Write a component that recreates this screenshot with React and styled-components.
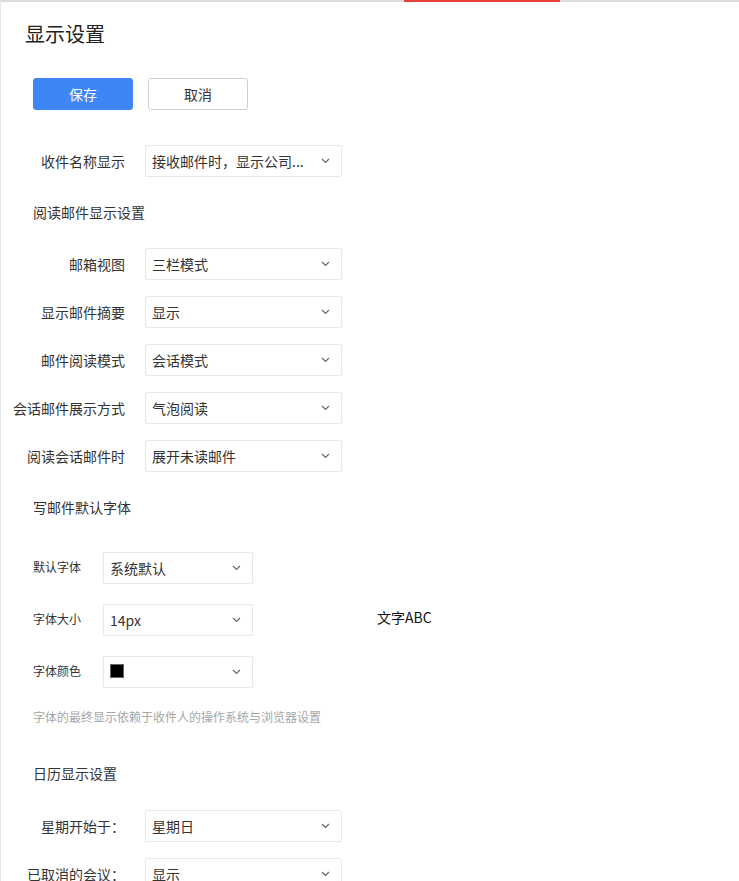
import React from "react";
import styled, { createGlobalStyle } from "styled-components";

const Global = createGlobalStyle`
  html, body { margin: 0; padding: 0; background: #fff; }
  body { font-family: "Noto Sans CJK SC", "Noto Sans", sans-serif; color: #333; }
  * { box-sizing: border-box; }
`;

const Page = styled.div`
  position: relative;
  min-height: 100vh;
  border-top: 2px solid #dcdcdc;
  border-left: 1px solid #e6e6e6;
  padding-top: 18px;
`;

const Progress = styled.div`
  position: absolute;
  top: -2px;
  left: 403px;
  width: 156px;
  height: 2px;
  background: #e8423a;
`;

const Title = styled.h1`
  margin: 0 0 30px 24px;
  font-size: 20px;
  font-weight: 400;
  line-height: 28px;
  color: #222;
`;

const Toolbar = styled.div`
  display: flex;
  gap: 15px;
  padding-left: 32px;
  margin-bottom: 35px;
`;

const Button = styled.button`
  width: 100px;
  height: 32px;
  border-radius: 3px;
  font-family: inherit;
  font-size: 14px;
  cursor: pointer;
  border: 1px solid ${(p) => (p.$primary ? "#3e86f6" : "#cfcfcf")};
  background: ${(p) => (p.$primary ? "#3e86f6" : "#fff")};
  color: ${(p) => (p.$primary ? "#fff" : "#333")};
`;

const Rows = styled.div`
  display: flex;
  flex-direction: column;
  gap: ${(p) => p.$gap || 16}px;
`;

const Row = styled.div`
  display: flex;
  align-items: center;
  height: 32px;
`;

const Label = styled.div`
  width: 124px;
  margin-right: 20px;
  text-align: right;
  font-size: 14px;
  white-space: nowrap;
`;

const SmallLabel = styled.div`
  width: 70px;
  padding-left: 32px;
  box-sizing: content-box;
  font-size: 12px;
  line-height: 16px;
  margin-top: -2px;
  white-space: nowrap;
`;

const Select = styled.div`
  width: ${(p) => p.$w || 197}px;
  height: 32px;
  border: 1px solid #e8e8e8;
  border-radius: 2px;
  display: flex;
  align-items: center;
  padding: 0 11px 0 6px;
  font-size: 14px;
  color: #333;
  background: #fff;
`;

const Value = styled.span`
  flex: 1;
  white-space: nowrap;
  overflow: hidden;
`;

const Swatch = styled.span`
  display: inline-block;
  width: 14px;
  height: 14px;
  background: #000;
  border: 1px solid #666;
  margin-top: 2px;
`;

const Section = styled.div`
  padding-left: 32px;
  font-size: 14px;
  line-height: 20px;
  margin: ${(p) => p.$m};
`;

const Hint = styled.div`
  padding-left: 32px;
  font-size: 12px;
  line-height: 18px;
  color: #a6a6a6;
  margin-top: 20px;
`;

const Preview = styled.div`
  margin-left: 124px;
  font-size: 14px;
  color: #111;
  margin-top: -6px;
`;

const Chevron = () => (
  <svg width="9" height="6" viewBox="0 0 9 6" fill="none">
    <path d="M1 1 L4.5 4.5 L8 1" stroke="#666" strokeWidth="1.2" />
  </svg>
);

const Dropdown = ({ w, children }) => (
  <Select $w={w}>
    <Value>{children}</Value>
    <Chevron />
  </Select>
);

const readRows = [
  ["邮箱视图", "三栏模式"],
  ["显示邮件摘要", "显示"],
  ["邮件阅读模式", "会话模式"],
  ["会话邮件展示方式", "气泡阅读"],
  ["阅读会话邮件时", "展开未读邮件"],
];

export default function App() {
  return (
    <>
      <Global />
      <Page>
        <Progress />
        <Title>显示设置</Title>
        <Toolbar>
          <Button $primary>保存</Button>
          <Button>取消</Button>
        </Toolbar>

        <Row>
          <Label>收件名称显示</Label>
          <Dropdown>接收邮件时，显示公司...</Dropdown>
        </Row>

        <Section $m="25px 0 26px">阅读邮件显示设置</Section>
        <Rows>
          {readRows.map(([l, v]) => (
            <Row key={l}>
              <Label>{l}</Label>
              <Dropdown>{v}</Dropdown>
            </Row>
          ))}
        </Rows>

        <Section $m="25px 0 35px">写邮件默认字体</Section>
        <Rows $gap={20}>
          <Row>
            <SmallLabel>默认字体</SmallLabel>
            <Dropdown w={150}>系统默认</Dropdown>
          </Row>
          <Row>
            <SmallLabel>字体大小</SmallLabel>
            <Dropdown w={150}>14px</Dropdown>
            <Preview>文字ABC</Preview>
          </Row>
          <Row>
            <SmallLabel>字体颜色</SmallLabel>
            <Dropdown w={150}>
              <Swatch />
            </Dropdown>
          </Row>
        </Rows>
        <Hint>字体的最终显示依赖于收件人的操作系统与浏览器设置</Hint>

        <Section $m="37px 0 27px">日历显示设置</Section>
        <Rows>
          <Row>
            <Label>星期开始于：</Label>
            <Dropdown>星期日</Dropdown>
          </Row>
          <Row>
            <Label>已取消的会议：</Label>
            <Dropdown>显示</Dropdown>
          </Row>
        </Rows>
      </Page>
    </>
  );
}
